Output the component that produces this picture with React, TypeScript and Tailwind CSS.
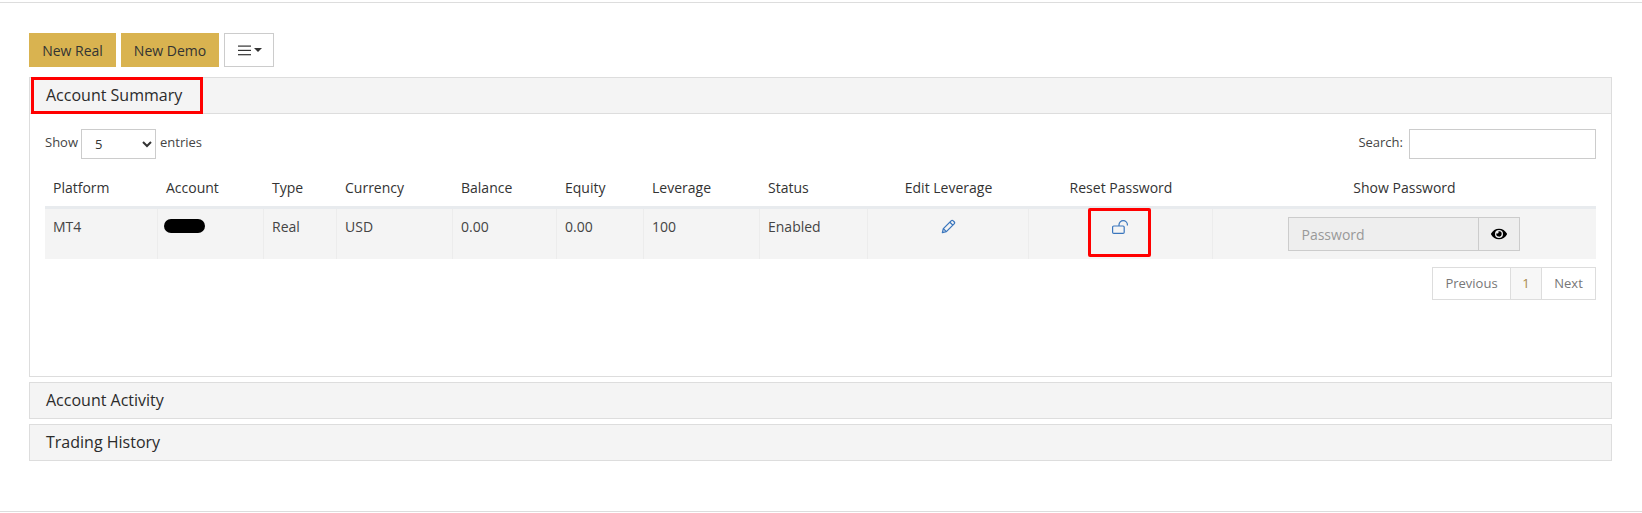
import { FaEye } from "react-icons/fa";

const font = "font-['Open_Sans',sans-serif]";

const columns = [
    { label: "Platform", width: "w-[113px]" },
    { label: "Account", width: "w-[106px]" },
    { label: "Type", width: "w-[73px]" },
    { label: "Currency", width: "w-[116px]" },
    { label: "Balance", width: "w-[104px]" },
    { label: "Equity", width: "w-[87px]" },
    { label: "Leverage", width: "w-[116px]" },
    { label: "Status", width: "w-[108px]" },
    { label: "Edit Leverage", width: "w-[161px]", center: true },
    { label: "Reset Password", width: "w-[184px]", center: true },
    { label: "Show Password", width: "w-[383px]", center: true },
];

function PencilIcon() {
    return (
        <svg width="15" height="15" viewBox="0 0 16 16" fill="none" stroke="#3a76bd" strokeWidth="1.4" strokeLinejoin="round" className="mx-auto">
            <path d="M1.5 14.5l1-4.2L10.8 2a1.6 1.6 0 0 1 2.2 0l1 1a1.6 1.6 0 0 1 0 2.2L5.7 13.5z" />
            <path d="M9.5 3.4l3.1 3.1M2.5 10.3l3.2 3.2" />
        </svg>
    );
}

function LockOpenIcon() {
    return (
        <svg width="17" height="14" viewBox="0 0 17 14" fill="none" stroke="#3a76bd" strokeWidth="1.2" className="mx-auto">
            <rect x="0.6" y="6" width="11.6" height="7.4" rx="1.2" />
            <path d="M7 6V4.8a4.2 4.2 0 0 1 8.4 0V5.6" />
        </svg>
    );
}

function Section({ title }: { title: string }) {
    return (
        <div className="mt-[5px] h-[37px] border border-[#dddddd] bg-[#f4f4f4] pl-[16px] text-[16px] leading-[35px] font-medium text-[#2b2b2b]">
            {title}
        </div>
    );
}

export default function App() {
    return (
        <div className={`${font} h-[513px] bg-white text-[14px] text-[#444444] overflow-hidden`}>
            <div className="mt-[2px] h-[1px] bg-[#dddddd]" />
            <div className="pl-[29px] pr-[30px] pt-[30px]">
                <div className="flex gap-[5px] h-[34px]">
                    <button className="w-[87px] bg-[#d9b350] text-[14px] text-[#333333]">New Real</button>
                    <button className="w-[98px] bg-[#d9b350] text-[14px] text-[#333333]">New Demo</button>
                    <button className="w-[50px] border border-[#cccccc] bg-white flex items-center justify-center gap-[3px] pl-[1px]">
                        <svg width="13" height="11" viewBox="0 0 13 11" fill="#333333">
                            <rect x="0" y="0.5" width="13" height="1.2" />
                            <rect x="0" y="4.8" width="13" height="1.2" />
                            <rect x="0" y="9.1" width="13" height="1.2" />
                        </svg>
                        <span className="w-0 h-0 border-x-[4px] border-x-transparent border-t-[4px] border-t-[#333333]" />
                    </button>
                </div>

                <div className="relative mt-[10px] h-[300px] border border-[#dddddd] flex flex-col">
                    <div className="h-[36px] shrink-0 border-b border-[#dddddd] bg-[#f4f4f4] pl-[16px] text-[16px] leading-[34px] font-medium text-[#2b2b2b]">
                        Account Summary
                    </div>
                    {/* red mark from the screenshot */}
                    <div className="absolute left-[1px] top-[-1px] h-[37px] w-[172px] border-[3px] border-[#ff0000]" />

                    <div className="px-[15px] pt-[15px]">
                        <div className="flex items-start justify-between h-[30px]">
                            <div className="flex items-start gap-[3px] text-[13px] leading-[26px]">
                                <span>Show</span>
                                <select className="mr-[1px] w-[75px] h-[30px] border border-[#cccccc] bg-white pl-[9px] text-[13px] text-[#333333]">
                                    <option>5</option>
                                </select>
                                <span>entries</span>
                            </div>
                            <div className="flex items-start gap-[6px] text-[13px] leading-[26px]">
                                <span>Search:</span>
                                <input className="w-[187px] h-[30px] border border-[#cccccc] bg-white" />
                            </div>
                        </div>

                        <table className="mt-[11px] w-[1551px] table-fixed border-separate border-spacing-0">
                            <colgroup>
                                {columns.map((c) => (
                                    <col key={c.label} className={c.width} />
                                ))}
                            </colgroup>
                            <thead>
                                <tr>
                                    {columns.map((c) => (
                                        <th
                                            key={c.label}
                                            className={`h-[39px] border-b-[3px] border-[#e8ebee] px-[8px] pb-[2px] text-[14px] font-medium text-[#333333] ${c.center ? "text-center" : "text-left"}`}
                                        >
                                            {c.label}
                                        </th>
                                    ))}
                                </tr>
                            </thead>
                            <tbody>
                                <tr className="h-[50px] bg-[#f4f4f4] align-top">
                                    <td className="px-[8px] pt-[7px] border-r border-[#ececec]">MT4</td>
                                    <td className="px-[6px] pt-[10px] border-r border-[#ececec]">
                                        <div className="h-[14px] w-[41px] rounded-full bg-black" />
                                    </td>
                                    <td className="px-[8px] pt-[7px] border-r border-[#ececec]">Real</td>
                                    <td className="px-[8px] pt-[7px] border-r border-[#ececec]">USD</td>
                                    <td className="px-[8px] pt-[7px] border-r border-[#ececec]">0.00</td>
                                    <td className="px-[8px] pt-[7px] border-r border-[#ececec]">0.00</td>
                                    <td className="px-[8px] pt-[7px] border-r border-[#ececec]">100</td>
                                    <td className="px-[8px] pt-[7px] border-r border-[#ececec]">Enabled</td>
                                    <td className="px-[8px] pt-[10px] border-r border-[#ececec]"><PencilIcon /></td>
                                    <td className="relative px-[8px] pt-[11px] border-r border-[#ececec]">
                                        <LockOpenIcon />
                                        {/* red mark from the screenshot */}
                                        <div className="absolute left-[59px] top-[-1px] h-[49px] w-[63px] rounded-[2px] border-[3px] border-[#ff0000]" />
                                    </td>
                                    <td className="pt-[8px] pr-[2px]">
                                        <div className="mx-auto flex w-[232px] h-[34px] border border-[#cccccc] bg-[#eeeeee]">
                                            <div className="flex-1 pl-[13px] leading-[34px] text-[#999999]">Password</div>
                                            <div className="w-[41px] border-l border-[#cccccc] flex items-center justify-center">
                                                <FaEye className="text-[16px] text-black" />
                                            </div>
                                        </div>
                                    </td>
                                </tr>
                            </tbody>
                        </table>

                        <div className="mt-[8px] flex justify-end">
                            <div className="flex h-[33px] border border-[#dddddd] text-[13px] text-[#777777] leading-[31px]">
                                <span className="w-[77px] text-center">Previous</span>
                                <span className="w-[32px] border-x border-[#dddddd] bg-[#f7f7f7] text-center text-[#a9894a]">1</span>
                                <span className="w-[53px] text-center">Next</span>
                            </div>
                        </div>
                    </div>
                </div>

                <Section title="Account Activity" />
                <Section title="Trading History" />
            </div>
            <div className="mt-[50px] h-[1px] bg-[#dddddd]" />
        </div>
    );
}
